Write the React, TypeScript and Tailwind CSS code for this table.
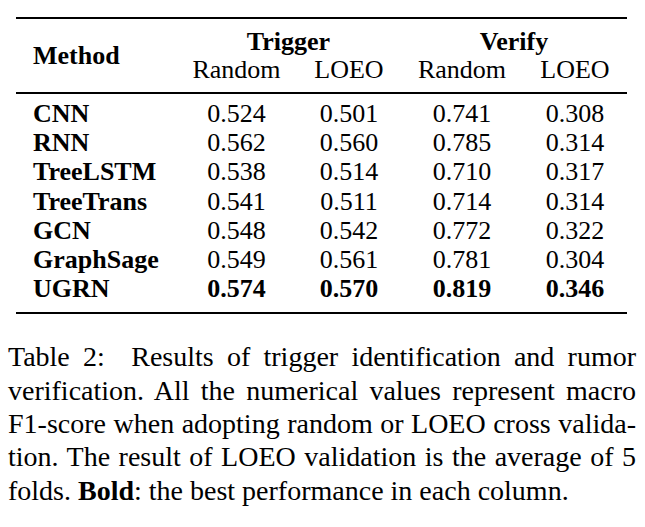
import React from "react"

type Row = { name: string; values: string[]; best?: boolean }

const ROWS: Row[] = [
  { name: "CNN", values: ["0.524", "0.501", "0.741", "0.308"] },
  { name: "RNN", values: ["0.562", "0.560", "0.785", "0.314"] },
  { name: "TreeLSTM", values: ["0.538", "0.514", "0.710", "0.317"] },
  { name: "TreeTrans", values: ["0.541", "0.511", "0.714", "0.314"] },
  { name: "GCN", values: ["0.548", "0.542", "0.772", "0.322"] },
  { name: "GraphSage", values: ["0.549", "0.561", "0.781", "0.304"] },
  { name: "UGRN", values: ["0.574", "0.570", "0.819", "0.346"], best: true },
]

const CAPTION_LINES = [
  "Results of trigger identification and rumor",
  "verification. All the numerical values represent macro",
  "F1-score when adopting random or LOEO cross valida-",
  "tion. The result of LOEO validation is the average of 5",
]

export default function App() {
  return (
    <div className="min-h-[527px] w-[645px] bg-white text-black font-['Liberation_Serif',serif]">
      <div className="pt-[17px] pl-[16px]">
        <div className="w-[611px]">
          <div className="h-[2px] bg-black" />

          {/* header */}
          <div className="grid grid-cols-[160px_121px_104px_122px_104px] pt-[8px] pb-[8px] text-[26px] leading-[29px]">
            <div className="row-span-2 flex items-center pl-[17px] font-bold">Method</div>
            <div className="col-span-2 text-center font-bold h-[28px]">Trigger</div>
            <div className="col-span-2 text-center font-bold h-[28px]">Verify</div>
            <div className="text-center">Random</div>
            <div className="text-center">LOEO</div>
            <div className="text-center">Random</div>
            <div className="text-center">LOEO</div>
          </div>

          <div className="h-[2px] bg-black" />

          {/* body */}
          <div className="pt-[5px] pb-[9px] text-[26px] leading-[29.2px]">
            {ROWS.map((row) => (
              <div key={row.name} className="grid grid-cols-[160px_121px_104px_122px_104px]">
                <div className="pl-[17px] font-bold">{row.name}</div>
                {row.values.map((v, i) => (
                  <div key={i} className={row.best ? "text-center font-bold" : "text-center"}>
                    {v}
                  </div>
                ))}
              </div>
            ))}
          </div>

          <div className="h-[2px] bg-black" />
        </div>
      </div>

      {/* caption */}
      <div className="mt-[26px] ml-[8px] w-[628px] text-[28px] leading-[33.3px]">
        {CAPTION_LINES.map((line, i) => (
          <div key={i} className="text-justify [text-align-last:justify] whitespace-nowrap">
            {i === 0 ? (
              <>
                Table 2:&nbsp; {line}
              </>
            ) : (
              line
            )}
          </div>
        ))}
        <div>
          folds. <span className="font-bold">Bold</span>: the best performance in each column.
        </div>
      </div>
    </div>
  )
}
